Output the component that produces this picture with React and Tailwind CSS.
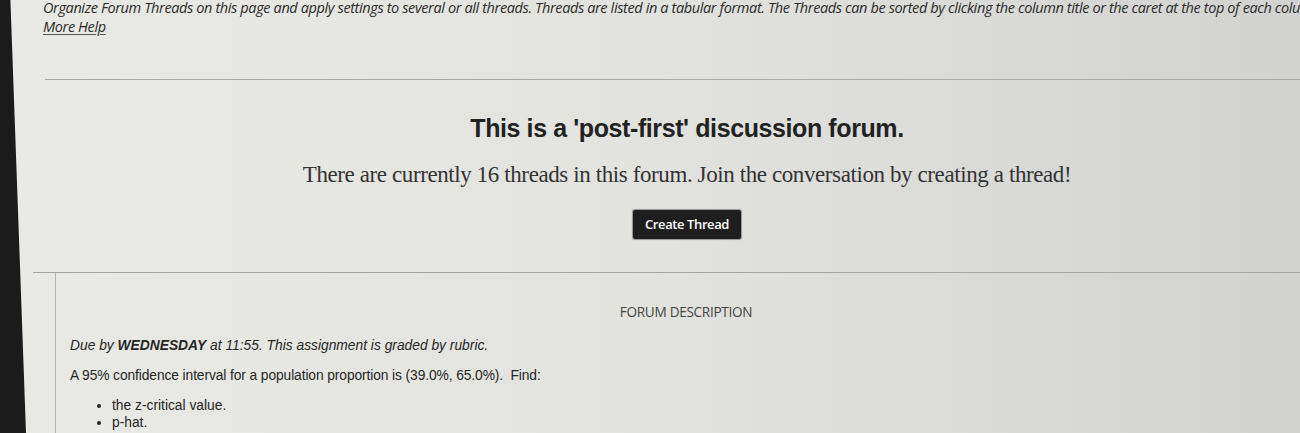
import React from 'react';

const openSans = { fontFamily: '"Open Sans", "Liberation Sans", sans-serif' };

const App = () => {
  return (
    <div className="w-[1300px] h-[433px] overflow-hidden flex bg-gradient-to-r from-[#e9e9e5] via-[#e2e2df] to-[#d2d3d1] text-[#2b2b2b]">
      {/* dark edge of the monitor */}
      <div className="w-[26px] shrink-0 bg-[#1b1b1b] [clip-path:polygon(0_0,40%_0,100%_100%,0_100%)]"></div>

      <div className="flex-1 min-w-0 flex flex-col">
        <div className="pl-[17px] mt-[-2px] whitespace-nowrap italic text-[14.5px] leading-[19px] tracking-[-0.38px]" style={openSans}>
          <p>Organize Forum Threads on this page and apply settings to several or all threads. Threads are listed in a tabular format. The Threads can be sorted by clicking the column title or the caret at the top of each column.</p>
          <a className="underline underline-offset-2 decoration-[#555]">More Help</a>
        </div>

        <div className="ml-[19px] mt-[43px] border-t border-[#a9aaa8]"></div>

        <div className="pl-[48px] flex flex-col items-center">
          <h1 className="mt-[33px] text-[25px] leading-[30px] font-bold text-[#222] tracking-[-0.4px]" style={{ fontFamily: '"Liberation Sans", Arial, sans-serif' }}>
            This is a 'post-first' discussion forum.
          </h1>
          <p className="mt-[18px] text-[23px] leading-[27px] text-[#333] tracking-[-0.4px]" style={{ fontFamily: '"Liberation Serif", "Times New Roman", serif' }}>
            There are currently 16 threads in this forum. Join the conversation by creating a thread!
          </p>
          <button className="mt-[21px] w-[110px] h-[31px] bg-[#1e1e1e] text-white text-[13px] font-semibold tracking-[-0.4px] rounded-[3px] border border-[#9a9a9a] shadow-[0_0_0_1px_#dcdcdc]" style={openSans}>
            Create Thread
          </button>
        </div>

        <div className="ml-[7px] mt-[32px] border-t border-[#a5a6a4]"></div>

        <div className="ml-[29px] flex-1 border-l border-[#b3b4b2]">
          <div className="pl-[16px] pt-[30px] text-center text-[13.6px] leading-[18px] text-[#444] tracking-[-0.3px]" style={openSans}>
            FORUM DESCRIPTION
          </div>
          <div className="pl-[14px] pt-[16px] text-[13.8px] text-[#262626]" style={{ fontFamily: '"Liberation Sans", Arial, sans-serif' }}>
            <p className="italic leading-[18px]">Due by <b>WEDNESDAY</b> at 11:55. This assignment is graded by rubric.</p>
            <p className="mt-[12px] leading-[18px] tracking-[-0.1px]">A 95% confidence interval for a population proportion is (39.0%, 65.0%).&nbsp; Find:</p>
            <ul className="mt-[12px] list-disc pl-[42px] leading-[17px]">
              <li>the z-critical value.</li>
              <li>p-hat.</li>
            </ul>
          </div>
        </div>
      </div>
    </div>
  );
};

export default App;
